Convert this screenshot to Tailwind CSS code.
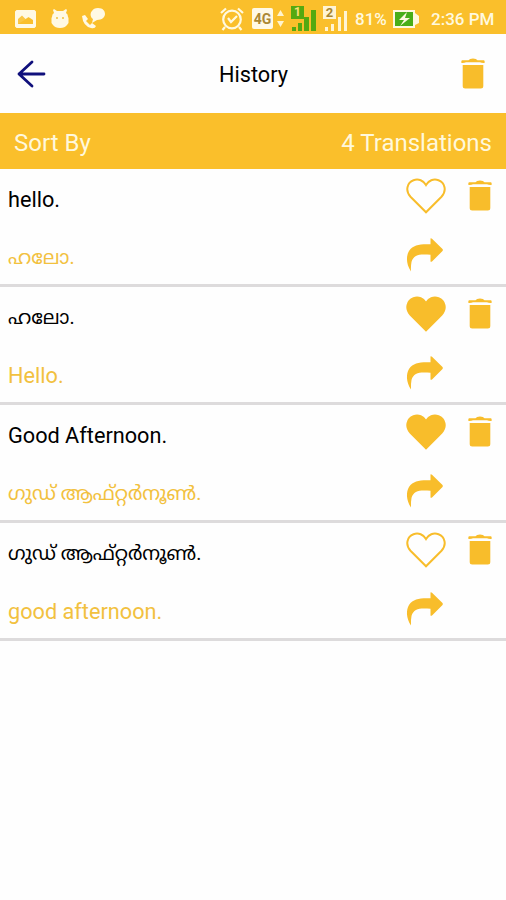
<!DOCTYPE html>
<html lang="en">
<head>
<meta charset="utf-8">
<title>History</title>
<script src="https://cdn.jsdelivr.net/npm/@tailwindcss/browser@4"></script>
</head>
<body class="bg-[#fefefe] font-['Roboto','Noto_Sans_Malayalam','Noto_Sans',sans-serif] text-black">
<svg class="hidden">
  <symbol id="trash" viewBox="0 0 24 31"><path d="M1 2.200H7.500Q8.500 .5 12 .5T16.500 2.200H23Q24 2.500 23.600 5 20.500 5.200 19 4.200H5Q3.500 5.200.4 5 0 2.500 1 2.200ZM1.700 7H22.300V28Q22.300 30.500 19.800 30.500H4.200Q1.700 30.500 1.700 28Z"/></symbol>
  <symbol id="heart" viewBox="0 0 40 36"><path d="M20 34.300 4.500 18.800C-1 13 1 4.500 7.500 2.200 12.500.5 17.500 2.500 20 7 22.500 2.500 27.500.5 32.500 2.200 39 4.500 41 13 35.500 18.800Z"/></symbol>
  <symbol id="share" viewBox="0 0 38 34"><path d="M24.500.5Q25 0 26 .8L36.500 11Q37.300 12 36.500 13L26 23.500Q25 24 24.500 23.500V16.800C15 15.800 7.500 16 5.500 24Q4.700 28 5 33.500C0 26 0 18 3 13 7.500 6.500 14 6 24.500 6.300Z"/></symbol>
</svg>
<div class="w-[506px] h-[900px] overflow-hidden">
  <header class="h-[34px] bg-[#fabf2b] flex items-center pt-[3px] pl-[15px] text-[#fff9df]">
    <svg class="w-[21px] h-[18px] shrink-0" viewBox="0 0 21 18"><path fill="#fff9e4" fill-rule="evenodd" d="M1.500 0H19.500L21 1.500V16.500L19.500 18H1.500L0 16.500V1.500ZM3 3V14H18V3Z"/><path fill="#fff9e4" d="M3 14V3H18V5Z" opacity=".15"/><path fill="#fff9e4" d="M3 3V9L7 5.500 10.500 9 13.500 7 18 10V3Z"/></svg>
    <svg class="ml-[15px] w-[18px] h-[19px] shrink-0" viewBox="0 0 18 19"><path d="M3 0 6 2H12L15 0 16 1 15 4Q17 5 17 8L17.500 9V14L16 16Q14 19 9 19T2 16L.5 14V9L1 8Q1 5 3 4L2 1Z" fill="#fff9e4"/><path d="M5 8h2v2H5zM11 8h2v2h-2z" fill="#f4cf68"/></svg>
    <svg class="ml-[13px] w-[23px] h-[21px] shrink-0" viewBox="0 0 23 21"><path fill="#fff9e4" d="M16 0C21 0 23 3 23 6S20 12 15 12L10 15 11 11C8 9 8 5 10 3 11 1 13 0 16 0ZM0 8 3 7 6 11 4 13 8 17 10 15 14 18Q13 21 9 20 1 18 0 8Z"/></svg>
    <svg class="ml-[115px] w-[24px] h-[24px] shrink-0" viewBox="0 0 24 24" fill="none" stroke="#fff9df" stroke-width="2.200"><circle cx="12" cy="12.500" r="8.800"/><path d="M8 11 11 15 17 9M1 6 6 1.500M18 1.500 23 6M5 20 2.500 23M19 20 21.500 23"/></svg>
    <span class="ml-[8px] w-[21px] h-[21px] shrink-0 rounded-[2px] bg-[#fff9e6] text-[#ac8835] text-[14px] leading-[22px] font-bold text-center">4G</span>
    <svg class="ml-[4px] w-[7px] h-[18px] shrink-0" viewBox="0 0 7 18" fill="#fff4cf"><path d="M3.500 0 7 6H0ZM0 11H7L3.500 17Z"/></svg>
    <div class="relative ml-[7px] w-[26px] h-[26px] shrink-0 text-[#55a910]">
      <svg class="w-[26px] h-[26px]" viewBox="0 0 26 26" fill="currentColor"><path d="M1 21h4v4H1zM7 17h4v8H7zM13 11h5v14h-5zM20 4h5v21h-5zM0 0h13v13H0z"/></svg>
      <span class="absolute left-0 top-0 w-[13px] text-center text-[12px] leading-[13px] font-bold text-[#ffe078]">1</span>
    </div>
    <div class="relative ml-[6px] w-[26px] h-[26px] shrink-0 text-[#fff4d3]">
      <svg class="w-[26px] h-[26px]" viewBox="0 0 26 26" fill="currentColor"><path d="M2 21h3v4H2zM8 18h3v7H8zM15 11h3v14h-3zM21 5h3v20h-3zM0 0h13v13H0z"/></svg>
      <span class="absolute left-0 top-0 w-[13px] text-center text-[13px] leading-[14px] font-bold text-[#a68531]">2</span>
    </div>
    <span class="ml-[6px] w-[32px] text-[17px] leading-[20px] font-medium whitespace-nowrap shrink-0">81%</span>
    <svg class="ml-[6px] w-[27px] h-[20px] shrink-0" viewBox="0 0 27 20"><path d="M0 1H22V4L26 7V14L22 16V19H0Z" fill="#fff9df"/><path d="M2 3H20V17H2Z" fill="#49ae19"/><path d="M14 3 6 11H11L7 17 17 9H12Z" fill="#fff9df"/></svg>
    <span class="ml-[11px] text-[17px] leading-[20px] font-medium whitespace-nowrap shrink-0">2:36 PM</span>
  </header>
  <nav class="h-[79px] flex items-center justify-between pl-[17px] pr-[21px]">
    <svg class="w-[29px] h-[28px]" viewBox="0 0 29 28" fill="none" stroke="#10107c" stroke-width="2.800" stroke-linecap="round" stroke-linejoin="round"><path d="M15 2 2 14 15 26M2 14H27"/></svg>
    <h1 class="text-[21.700px] leading-[26px] pt-[3px]">History</h1>
    <svg class="w-[24px] h-[31px] fill-[#f8bd2b]"><use href="#trash"/></svg>
  </nav>
  <div class="h-[56px] bg-[#fabf2b] flex items-center justify-between pl-[14px] pr-[14px] pt-[3px] text-[24px] text-[#fff8dc]"><span>Sort By</span><span>4 Translations</span></div>
  <main>
    <section class="h-[118px] border-b-[3px] border-[#dddbdc] flex justify-between pl-[8px] pr-[14px]">
      <div class="flex flex-col pt-[17px] gap-[30px] text-[21.700px] leading-[28px]"><p>hello.</p><p class="text-[#f2c13f] text-[19.500px]">ഹലോ.</p></div>
      <div class="grid grid-cols-[62px_24px] grid-rows-[58px_40px] pt-[9px]">
        <svg class="w-[40px] h-[36px] fill-none stroke-[#f8bd2b] stroke-2"><use href="#heart"/></svg>
        <svg class="mt-[2px] w-[24px] h-[31px] fill-[#f8bd2b]"><use href="#trash"/></svg>
        <svg class="mt-[2px] w-[38px] h-[34px] fill-[#f8bd2b]"><use href="#share"/></svg>
      </div>
    </section>
    <section class="h-[118px] border-b-[3px] border-[#dddbdc] flex justify-between pl-[8px] pr-[14px]">
      <div class="flex flex-col pt-[17px] gap-[30px] text-[21.700px] leading-[28px]"><p class="text-[19.500px]">ഹലോ.</p><p class="text-[#f2c13f]">Hello.</p></div>
      <div class="grid grid-cols-[62px_24px] grid-rows-[58px_40px] pt-[9px]">
        <svg class="w-[40px] h-[36px] fill-[#f8bd2b] stroke-[#f8bd2b] stroke-2"><use href="#heart"/></svg>
        <svg class="mt-[2px] w-[24px] h-[31px] fill-[#f8bd2b]"><use href="#trash"/></svg>
        <svg class="mt-[2px] w-[38px] h-[34px] fill-[#f8bd2b]"><use href="#share"/></svg>
      </div>
    </section>
    <section class="h-[118px] border-b-[3px] border-[#dddbdc] flex justify-between pl-[8px] pr-[14px]">
      <div class="flex flex-col pt-[17px] gap-[30px] text-[21.700px] leading-[28px]"><p>Good Afternoon.</p><p class="text-[#f2c13f] text-[19.500px]">ഗുഡ് ആഫ്റ്റർനൂൺ.</p></div>
      <div class="grid grid-cols-[62px_24px] grid-rows-[58px_40px] pt-[9px]">
        <svg class="w-[40px] h-[36px] fill-[#f8bd2b] stroke-[#f8bd2b] stroke-2"><use href="#heart"/></svg>
        <svg class="mt-[2px] w-[24px] h-[31px] fill-[#f8bd2b]"><use href="#trash"/></svg>
        <svg class="mt-[2px] w-[38px] h-[34px] fill-[#f8bd2b]"><use href="#share"/></svg>
      </div>
    </section>
    <section class="h-[118px] border-b-[3px] border-[#dddbdc] flex justify-between pl-[8px] pr-[14px]">
      <div class="flex flex-col pt-[17px] gap-[30px] text-[21.700px] leading-[28px]"><p class="text-[19.500px]">ഗുഡ് ആഫ്റ്റർനൂൺ.</p><p class="text-[#f2c13f]">good afternoon.</p></div>
      <div class="grid grid-cols-[62px_24px] grid-rows-[58px_40px] pt-[9px]">
        <svg class="w-[40px] h-[36px] fill-none stroke-[#f8bd2b] stroke-2"><use href="#heart"/></svg>
        <svg class="mt-[2px] w-[24px] h-[31px] fill-[#f8bd2b]"><use href="#trash"/></svg>
        <svg class="mt-[2px] w-[38px] h-[34px] fill-[#f8bd2b]"><use href="#share"/></svg>
      </div>
    </section>
  </main>
</div>
</body>
</html>
